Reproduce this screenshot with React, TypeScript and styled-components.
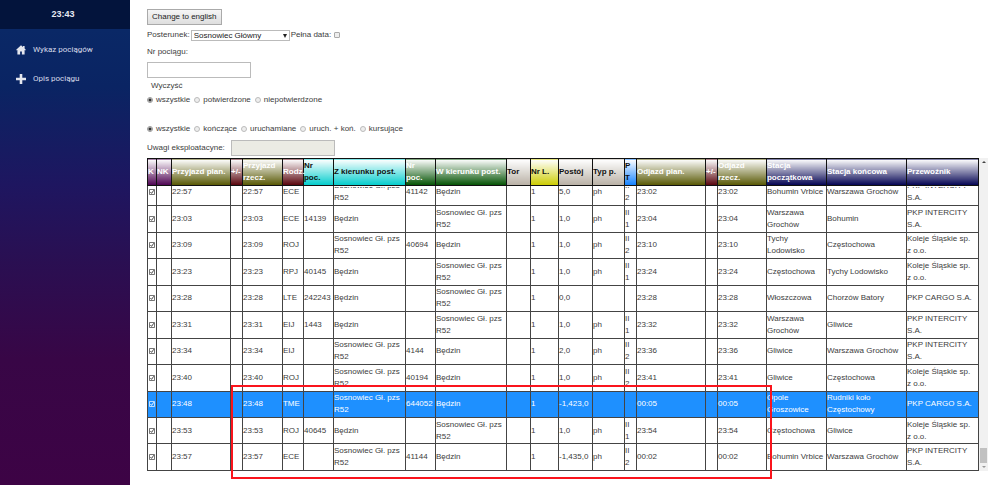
import React from "react";
import styled, { createGlobalStyle } from "styled-components";

const Global = createGlobalStyle`
  * { box-sizing: border-box; }
  body { margin: 0; background: #fff; color: #3c3c3c; font: 8px/12px "Liberation Sans", Arial, sans-serif; }
  button, input, select { font: inherit; color: inherit; margin: 0; }
`;

const Page = styled.div`
  display: flex;
  align-items: stretch;
  min-height: 100vh;
`;

const Sidebar = styled.aside`
  flex: 0 0 130px;
  background: linear-gradient(180deg, #0a2866 6%, #0a2463 18%, #1e1660 38%, #2a0f52 54%, #380646 74%, #3d0345 100%);
  color: #d9dcea;
`;

const Clock = styled.div`
  height: 29px;
  line-height: 29px;
  padding-right: 4px;
  text-align: center;
  font-size: 9px;
  font-weight: bold;
  color: #e6e9f2;
  background: #03143c;
`;

const Nav = styled.nav`
  display: flex;
  flex-direction: column;
  gap: 17px;
  padding: 15px 16px;
  font-family: Roboto, "Liberation Sans", sans-serif;
`;

const NavLink = styled.a`
  display: flex;
  align-items: center;
  gap: 7px;
  color: inherit;
  text-decoration: none;
`;

const NavIcon = styled.svg`
  width: 10px;
  height: 10px;
  fill: #e4e6ee;
`;

const Main = styled.main`
  flex: 1;
  min-width: 0;
  padding: 9px 12px 6px 17px;
`;

const Line = styled.div<{ $top?: number; $height?: number; $gap?: number }>`
  display: flex;
  align-items: center;
  gap: ${(p) => p.$gap ?? 0}px;
  height: ${(p) => p.$height ?? 12}px;
  margin-top: ${(p) => p.$top ?? 0}px;
`;

const PlainButton = styled.button`
  height: 16px;
  padding: 0 4px;
  border: 1px solid #aaa;
  border-radius: 0;
  background: linear-gradient(#f6f6f6, #dedede);
  color: #222;
`;

const LinkButton = styled.button`
  padding: 0 4px;
  border: 0;
  background: none;
`;

const Select = styled.select`
  appearance: none;
  width: 99px;
  height: 11px;
  line-height: 9px;
  padding: 0 2px;
  border: 1px solid #bbb;
  border-radius: 0;
  color: #222;
  background: #fff;
`;

const SelectBox = styled.span`
  position: relative;
  display: flex;
  &::after {
    content: "";
    position: absolute;
    right: 3px;
    top: 4px;
    border: 2px solid transparent;
    border-top: 4px solid #222;
    border-bottom: 0;
  }
`;

const TextBox = styled.input`
  width: 104px;
  height: 16px;
  padding: 0 3px;
  border: 1px solid #bbb;
  background: #fff;
  &:disabled { background: #ebebe4; }
`;

const Check = styled.input`
  appearance: none;
  width: 6px;
  height: 6px;
  border: 1px solid #aaa;
  border-radius: 1px;
  background: #eee;
`;

const Radio = styled(Check)`
  border-radius: 50%;
  border-color: #bbb;
  &:checked { background: radial-gradient(circle, #333 0 1px, #ddd 2px); border-color: #999; }
`;

const Option = styled.label`
  display: flex;
  align-items: center;
  gap: 3px;
`;

const TableArea = styled.div`
  position: relative;
  display: flex;
  margin-top: 2px;
`;

const Table = styled.table`
  flex: 1;
  width: 100%;
  min-width: 0;
  height: 313px;
  table-layout: fixed;
  border-collapse: collapse;
  border: 1px solid #222;
`;

const Head = styled.th<{ $bg: string; $dark?: boolean }>`
  height: 27px;
  padding: 0;
  border: 1px solid #111;
  text-align: left;
  white-space: pre-line;
  color: ${(p) => (p.$dark ? "#111" : "#fff")};
  background: linear-gradient(#fff, ${(p) => p.$bg});
`;

const Row = styled.tr<{ $active?: boolean }>`
  background: ${(p) => (p.$active ? "#1e90ff" : "#fff")};
  color: ${(p) => (p.$active ? "#fff" : "inherit")};
`;

const Cell = styled.td`
  padding: 0;
  border: 1px solid #444;
  white-space: pre-line;
`;

const Scrolled = styled.div`
  display: flex;
  flex-direction: column;
  justify-content: flex-end;
  height: 18px;
  overflow: hidden;
`;

const ScrolledText = styled.div`
  display: flex;
  flex: 0 0 26px;
  align-items: center;
`;

const Tick = styled.svg`
  display: block;
  width: 6px;
  height: 6px;
  margin-left: 1px;
  fill: none;
  stroke: currentColor;
`;

const ScrollTrack = styled.div`
  display: flex;
  flex: 0 0 9px;
  flex-direction: column;
  align-items: center;
  background: #f1f1f1;
`;

const Arrow = styled.span<{ $down?: boolean }>`
  margin: 3px 0;
  border: 2px solid transparent;
  ${(p) => (p.$down ? "border-top-color: #999; border-bottom: 0;" : "border-bottom-color: #444; border-top: 0;")}
`;

const Thumb = styled.span`
  width: 7px;
  height: 15px;
  margin-top: auto;
  background: #c1c1c1;
`;

const Marker = styled.div`
  position: absolute;
  left: 10%;
  right: 25.7%;
  top: 227px;
  height: 94px;
  border: 2px solid #fa141c;
  pointer-events: none;
`;

const columns: [string, number, string, boolean?][] = [
  ["K", 9, "#4b0050"],
  ["NK", 15, "#4b0050"],
  ["Przyjazd plan.", 59, "#565600"],
  ["+/-", 12, "#560008"],
  ["Przyjazd\nrzecz.", 40, "#565600"],
  ["Rodz.", 21, "#560008"],
  ["Nr\npoc.", 30, "#00cccc", true],
  ["Z kierunku post.", 72, "#00cccc", true],
  ["Nr\npoc.", 30, "#005000"],
  ["W kierunku post.", 71, "#005000"],
  ["Tor", 24, "#b8b0a4", true],
  ["Nr L.", 28, "#cccc00", true],
  ["Postój", 34, "#b8b0a4", true],
  ["Typ p.", 32, "#b8b0a4", true],
  ["P\nT", 12, "#1080ff", true],
  ["Odjazd plan.", 69, "#565600"],
  ["+/-", 12, "#560008"],
  ["Odjazd\nrzecz.", 49, "#565600"],
  ["Stacja\npoczątkowa", 60, "#000050"],
  ["Stacja końcowa", 80, "#000050"],
  ["Przewoźnik", 72, "#000050"],
];

const SG = "Sosnowiec Gł. pzs R52";
const B = "Będzin";
const IC = "PKP INTERCITY\nS.A.";
const KS = "Koleje Śląskie sp.\nz o.o.";
const CARGO = "PKP CARGO S.A.";

// arrival, type, number in, from, number out, to, stop, stop type, platform/track, departure, origin, destination, carrier
const trains: string[][] = [
  ["22:57", "ECE", "", SG, "41142", B, "5,0", "ph", "II\n2", "23:02", "Bohumin Vrbice", "Warszawa Grochów", IC],
  ["23:03", "ECE", "14139", B, "", SG, "1,0", "ph", "II\n1", "23:04", "Warszawa Grochów", "Bohumin", IC],
  ["23:09", "ROJ", "", SG, "40694", B, "1,0", "ph", "II\n2", "23:10", "Tychy Lodowisko", "Częstochowa", KS],
  ["23:23", "RPJ", "40145", B, "", SG, "1,0", "ph", "II\n1", "23:24", "Częstochowa", "Tychy Lodowisko", KS],
  ["23:28", "LTE", "242243", B, "", SG, "0,0", "", "", "23:28", "Włoszczowa", "Chorzów Batory", CARGO],
  ["23:31", "EIJ", "1443", B, "", SG, "1,0", "ph", "II\n1", "23:32", "Warszawa Grochów", "Gliwice", IC],
  ["23:34", "EIJ", "", SG, "4144", B, "2,0", "ph", "II\n2", "23:36", "Gliwice", "Warszawa Grochów", IC],
  ["23:40", "ROJ", "", SG, "40194", B, "1,0", "ph", "II\n2", "23:41", "Gliwice", "Częstochowa", KS],
  ["23:48", "TME", "", SG, "644052", B, "-1,423,0", "", "", "00:05", "Opole Groszowice", "Rudniki koło Częstochowy", CARGO],
  ["23:53", "ROJ", "40645", B, "", SG, "1,0", "ph", "II\n1", "23:54", "Częstochowa", "Gliwice", KS],
  ["23:57", "ECE", "", SG, "41144", B, "-1,435,0", "ph", "II\n2", "00:02", "Bohumin Vrbice", "Warszawa Grochów", IC],
];

const TickBox = () => (
  <Tick viewBox="0 0 6 6" role="img" aria-label="potwierdzony">
    <path d="M.5 .5h5v5h-5z" strokeWidth="0.7" />
    <path d="M1.4 3l1.2 1.4L4.8 1.2" strokeWidth="0.9" />
  </Tick>
);

const RadioGroup = ({ name, options }: { name: string; options: string[] }) => (
  <>
    {options.map((o, i) => (
      <Option key={o}>
        <Radio type="radio" name={name} defaultChecked={i === 0} />
        {o}
      </Option>
    ))}
  </>
);

export default function App() {
  return (
    <Page>
      <Global />
      <Sidebar>
        <Clock>23:43</Clock>
        <Nav>
          <NavLink href="#wykaz">
            <NavIcon viewBox="0 0 10 10"><path d="M5 .3L.2 4.7l.6.7.6-.4v4.5h2.7V6.4h1.8v3.1h2.7V5l.6.4.6-.7-1.2-1.1V.9H7v1.2z" /></NavIcon>
            Wykaz pociągów
          </NavLink>
          <NavLink href="#opis">
            <NavIcon viewBox="0 0 10 10"><path d="M3.7 0h2.6v3.7H10v2.6H6.3V10H3.7V6.3H0V3.7h3.7z" /></NavIcon>
            Opis pociągu
          </NavLink>
        </Nav>
      </Sidebar>
      <Main>
        <Line $height={16}><PlainButton type="button">Change to english</PlainButton></Line>
        <Line $top={4} $gap={1}>
          <label htmlFor="post">Posterunek:</label>
          <SelectBox>
            <Select id="post"><option>Sosnowiec Główny</option></Select>
          </SelectBox>
          <label htmlFor="full">Pełna data:&nbsp;</label>
          <Check id="full" type="checkbox" />
        </Line>
        <Line $top={5}><label htmlFor="nr">Nr pociągu:</label></Line>
        <Line $top={4} $height={16}><TextBox id="nr" /></Line>
        <Line $top={2}><LinkButton type="button">Wyczyść</LinkButton></Line>
        <Line $top={2} $gap={4}><RadioGroup name="conf" options={["wszystkie", "potwierdzone", "niepotwierdzone"]} /></Line>
        <Line $top={17} $gap={4}><RadioGroup name="kind" options={["wszystkie", "kończące", "uruchamiane", "uruch. + koń.", "kursujące"]} /></Line>
        <Line $top={5} $height={16} $gap={4}>
          <label htmlFor="notes">Uwagi eksploatacyne:&nbsp;</label>
          <TextBox id="notes" disabled />
        </Line>
        <TableArea>
          <Table>
            <colgroup>{columns.map(([, w], i) => <col key={i} width={`${(w / 831) * 100}%`} />)}</colgroup>
            <thead>
              <tr>{columns.map(([t, , bg, dark], i) => <Head key={i} $bg={bg} $dark={dark}>{t}</Head>)}</tr>
            </thead>
            <tbody>
              {trains.map((t, i) => {
                const [arr, type, nin, from, nout, to, stop, st, pt, dep, org, dst, car] = t;
                const cells = [<TickBox key="t" />, "", arr, "", arr, type, nin, from, nout, to, "", "1", stop, st, pt, dep, "", dep, org, dst, car];
                return (
                  <Row key={arr} $active={arr === "23:48"}>
                    {cells.map((c, j) => (
                      <Cell key={j}>{i === 0 ? <Scrolled><ScrolledText>{c}</ScrolledText></Scrolled> : c}</Cell>
                    ))}
                  </Row>
                );
              })}
            </tbody>
          </Table>
          <ScrollTrack>
            <Arrow />
            <Thumb />
            <Arrow $down />
          </ScrollTrack>
          <Marker />
        </TableArea>
      </Main>
    </Page>
  );
}
